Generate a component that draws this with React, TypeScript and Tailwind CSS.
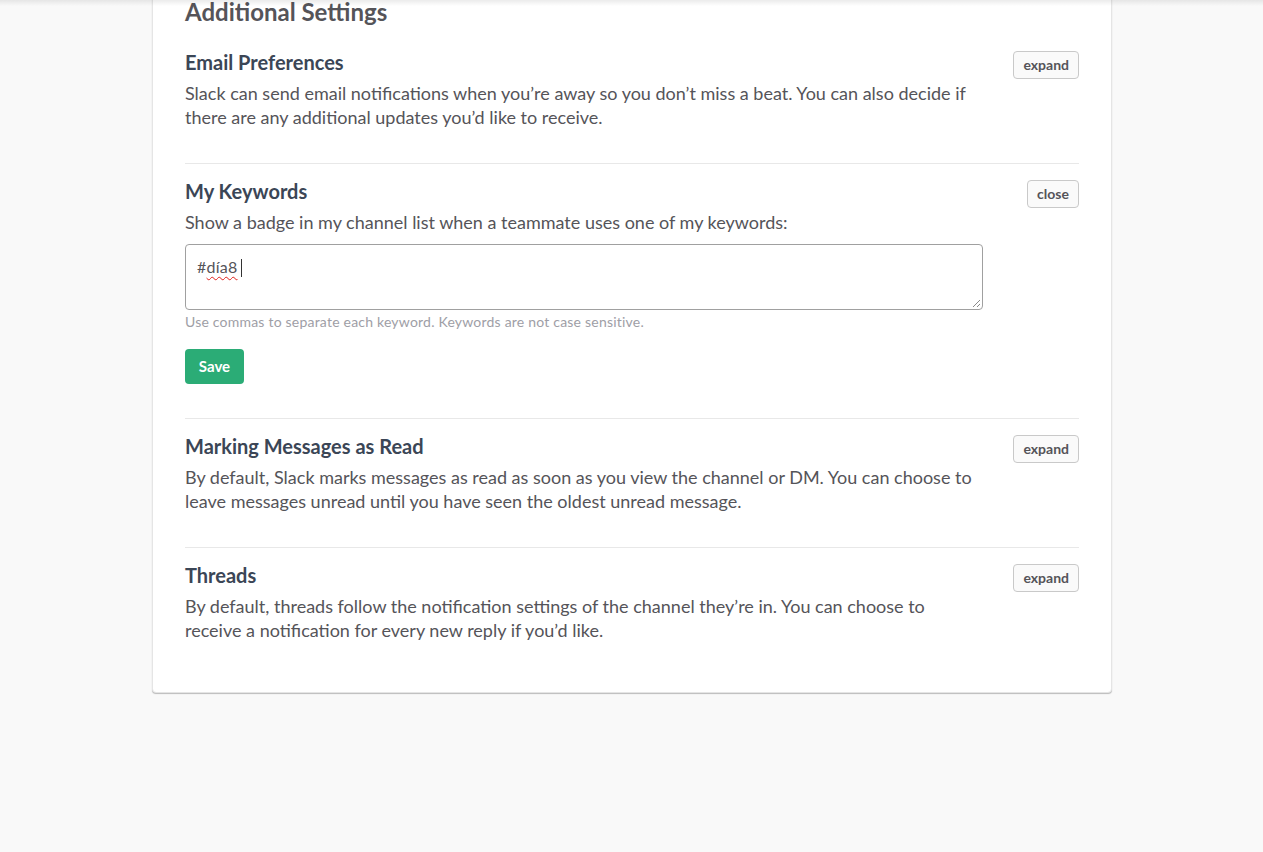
import React from "react";

function SmallButton({ label }: { label: string }) {
  return (
    <button className="shrink-0 h-[28px] px-[9px] rounded-[4px] border border-[#c9c9c9] bg-[#fafafa] text-[14px] font-bold text-[#555459] leading-none">
      {label}
    </button>
  );
}

function Section({
  title,
  button,
  children,
  last,
}: {
  title: string;
  button: string;
  children: React.ReactNode;
  last?: boolean;
}) {
  return (
    <div className={`flex justify-between pt-[15px] ${last ? "pb-[50px]" : "pb-[34px] border-b border-[#e8e8e8]"}`}>
      <div className="w-[798px]">
        <h3 className="text-[20px] leading-[24px] font-bold text-[#3b4656] mb-[7px]">{title}</h3>
        {children}
      </div>
      <div className="pt-[1px]">
        <SmallButton label={button} />
      </div>
    </div>
  );
}

const body = "text-[18px] leading-[24px] text-[#555459]";

export default function App() {
  return (
    <div
      className="relative min-h-[852px] bg-[#f9f9f9] overflow-hidden"
      style={{ fontFamily: "Lato, 'Noto Sans', sans-serif" }}
    >
      <div className="pointer-events-none absolute inset-x-0 top-0 h-[6px] bg-gradient-to-b from-[rgba(0,0,0,0.08)] to-transparent z-10" />
      <div className="w-[960px] ml-[152px] -mt-[200px] bg-white border border-[#e5e5e5] rounded-[4px] shadow-[0_1px_1px_rgba(0,0,0,0.25)] px-[32px]">
        <div className="h-[200px]" />
        <h2 className="text-[24px] leading-[30px] font-bold text-[#555459] -mt-[4px] mb-[8px]">Additional Settings</h2>

        <Section title="Email Preferences" button="expand">
          <p className={body}>
            Slack can send email notifications when you’re away so you don’t miss a beat. You can also decide if there are any additional updates you’d like to receive.
          </p>
        </Section>

        <Section title="My Keywords" button="close">
          <p className={body}>
            Show a badge in my channel list when a teammate uses one of my keywords:
          </p>
          <div className="relative mt-[10px] h-[66px] w-[798px] rounded-[4px] border border-[#a0a0a0] px-[11px] pt-[12px] text-[16px] leading-[20px] tracking-[0.015em] text-[#555459]">
            <span>#</span>
            <span className="underline decoration-wavy decoration-[#e0201b] decoration-[1px] underline-offset-[3px]">día8</span>
            <span className="inline-block w-[1px] h-[18px] bg-[#333] align-middle ml-[3px] -mt-[2px]" />
            <svg className="absolute right-[1px] bottom-[1px]" width="10" height="10" viewBox="0 0 10 10">
              <line x1="9" y1="2" x2="2" y2="9" stroke="#8a8a8a" strokeWidth="1" />
              <line x1="9" y1="6" x2="6" y2="9" stroke="#8a8a8a" strokeWidth="1" />
            </svg>
          </div>
          <p className="mt-[3px] text-[14px] leading-[18px] tracking-[0.015em] text-[#9e9ea6]">
            Use commas to separate each keyword. Keywords are not case sensitive.
          </p>
          <button className="mt-[18px] h-[35px] w-[59px] rounded-[4px] bg-[#2bac76] text-white text-[15px] font-bold">
            Save
          </button>
        </Section>

        <Section title="Marking Messages as Read" button="expand">
          <p className={body}>
            By default, Slack marks messages as read as soon as you view the channel or DM. You can choose to leave messages unread until you have seen the oldest unread message.
          </p>
        </Section>

        <Section title="Threads" button="expand" last>
          <p className={body}>
            By default, threads follow the notification settings of the channel they’re in. You can choose to receive a notification for every new reply if you’d like.
          </p>
        </Section>
      </div>
    </div>
  );
}
